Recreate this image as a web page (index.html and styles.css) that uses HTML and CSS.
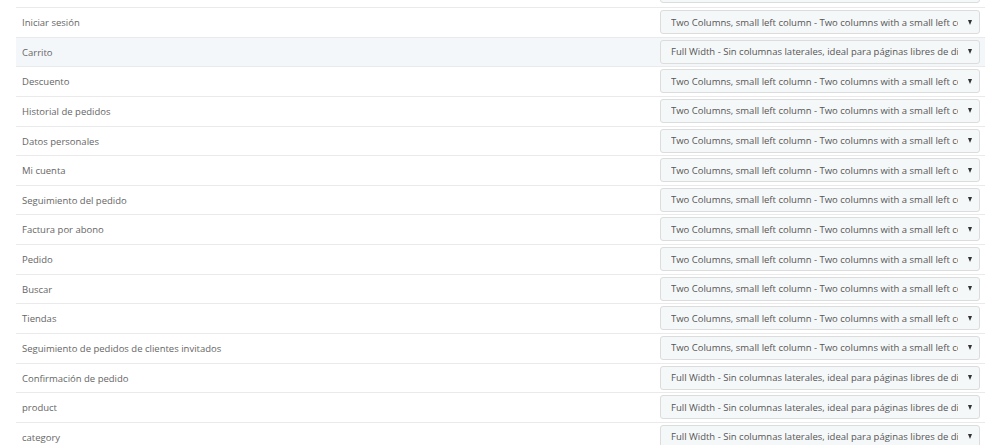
FILE: index.html
```html
<!DOCTYPE html>
<html lang="es">
<head>
<meta charset="UTF-8">
<title>Layouts</title>
<link rel="stylesheet" href="styles.css">
</head>
<body>
<div class="panel">
    <div class="layout-list">
        <div class="layout-row">
            <span class="page-name">Restablecer contraseña</span>
            <div class="layout-select"><span class="value">Two Columns, small left column - Two columns with a small left column</span><span class="caret"></span></div>
        </div>
        <div class="layout-row">
            <span class="page-name">Iniciar sesión</span>
            <div class="layout-select"><span class="value">Two Columns, small left column - Two columns with a small left column</span><span class="caret"></span></div>
        </div>
        <div class="layout-row hover">
            <span class="page-name">Carrito</span>
            <div class="layout-select"><span class="value">Full Width - Sin columnas laterales, ideal para páginas libres de distracciones</span><span class="caret"></span></div>
        </div>
        <div class="layout-row">
            <span class="page-name">Descuento</span>
            <div class="layout-select"><span class="value">Two Columns, small left column - Two columns with a small left column</span><span class="caret"></span></div>
        </div>
        <div class="layout-row">
            <span class="page-name">Historial de pedidos</span>
            <div class="layout-select"><span class="value">Two Columns, small left column - Two columns with a small left column</span><span class="caret"></span></div>
        </div>
        <div class="layout-row">
            <span class="page-name">Datos personales</span>
            <div class="layout-select"><span class="value">Two Columns, small left column - Two columns with a small left column</span><span class="caret"></span></div>
        </div>
        <div class="layout-row">
            <span class="page-name">Mi cuenta</span>
            <div class="layout-select"><span class="value">Two Columns, small left column - Two columns with a small left column</span><span class="caret"></span></div>
        </div>
        <div class="layout-row">
            <span class="page-name">Seguimiento del pedido</span>
            <div class="layout-select"><span class="value">Two Columns, small left column - Two columns with a small left column</span><span class="caret"></span></div>
        </div>
        <div class="layout-row">
            <span class="page-name">Factura por abono</span>
            <div class="layout-select"><span class="value">Two Columns, small left column - Two columns with a small left column</span><span class="caret"></span></div>
        </div>
        <div class="layout-row">
            <span class="page-name">Pedido</span>
            <div class="layout-select"><span class="value">Two Columns, small left column - Two columns with a small left column</span><span class="caret"></span></div>
        </div>
        <div class="layout-row">
            <span class="page-name">Buscar</span>
            <div class="layout-select"><span class="value">Two Columns, small left column - Two columns with a small left column</span><span class="caret"></span></div>
        </div>
        <div class="layout-row">
            <span class="page-name">Tiendas</span>
            <div class="layout-select"><span class="value">Two Columns, small left column - Two columns with a small left column</span><span class="caret"></span></div>
        </div>
        <div class="layout-row">
            <span class="page-name">Seguimiento de pedidos de clientes invitados</span>
            <div class="layout-select"><span class="value">Two Columns, small left column - Two columns with a small left column</span><span class="caret"></span></div>
        </div>
        <div class="layout-row">
            <span class="page-name">Confirmación de pedido</span>
            <div class="layout-select"><span class="value">Full Width - Sin columnas laterales, ideal para páginas libres de distracciones</span><span class="caret"></span></div>
        </div>
        <div class="layout-row">
            <span class="page-name">product</span>
            <div class="layout-select"><span class="value">Full Width - Sin columnas laterales, ideal para páginas libres de distracciones</span><span class="caret"></span></div>
        </div>
        <div class="layout-row">
            <span class="page-name">category</span>
            <div class="layout-select"><span class="value">Full Width - Sin columnas laterales, ideal para páginas libres de distracciones</span><span class="caret"></span></div>
        </div>
    </div>
</div>
</body>
</html>
```

FILE: styles.css
```css
html, body {
    margin: 0;
    padding: 0;
    background: #fff;
    overflow: hidden;
}

body {
    font-family: "Open Sans", "DejaVu Sans", sans-serif;
    font-size: 9.5px;
    color: #666;
}

.panel {
    padding: 0 15px 0 16px;
}

.layout-list {
    margin-top: -22.6px;
    width: 969px;
}

.layout-row {
    display: flex;
    align-items: flex-start;
    justify-content: space-between;
    box-sizing: border-box;
    height: 29.64px;
    border-top: 1px solid #eaeaea;
    padding: 2px 5px 0 6px;
}

.layout-row:first-child {
    border-top: none;
}

.layout-row.hover {
    background-color: #f4f7f9;
}

.page-name {
    line-height: 26px;
}

.layout-select {
    display: flex;
    align-items: center;
    box-sizing: border-box;
    width: 320px;
    height: 24px;
    padding: 0 7px 0 10px;
    border: 1px solid #dcdcdc;
    border-radius: 3px;
    background-color: #f5f8f9;
    color: #555;
}

.layout-select .value {
    flex: 1;
    white-space: nowrap;
    overflow: hidden;
    margin-right: 10px;
}

.layout-select .caret {
    width: 0;
    height: 0;
    border-left: 2.5px solid transparent;
    border-right: 2.5px solid transparent;
    border-top: 5px solid #333;
}
```
